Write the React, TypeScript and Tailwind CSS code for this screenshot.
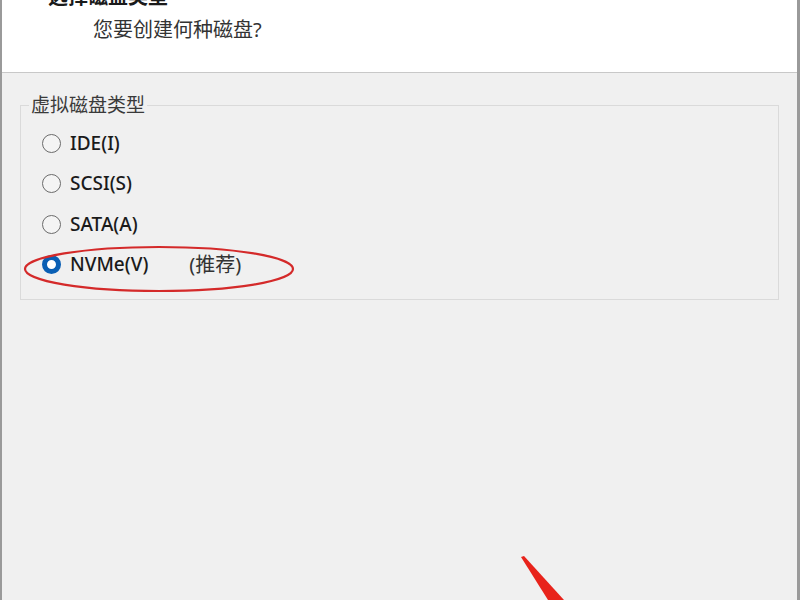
const options = [
  { label: "IDE(I)", checked: false },
  { label: "SCSI(S)", checked: false },
  { label: "SATA(A)", checked: false },
  { label: "NVMe(V)", checked: true, note: "(推荐)" },
];

function Radio({ checked }: { checked: boolean }) {
  if (checked) {
    return (
      <span className="w-[19px] h-[19px] rounded-full border-[5px] border-[#0a5fb4] bg-white shrink-0" />
    );
  }
  return (
    <span className="w-[19px] h-[19px] rounded-full border border-[#6b6b6b] bg-[#f4f4f4] shrink-0" />
  );
}

export default function App() {
  return (
    <div
      className="relative w-[800px] h-[600px] overflow-hidden bg-[#f0f0f0] border-l-2 border-r-[3px] border-[#9a9a9a] text-[#1a1a1a]"
      style={{ fontFamily: '"Noto Sans", "Noto Sans CJK SC", sans-serif' }}
    >
      {/* header */}
      <div className="h-[73px] flex flex-col bg-white border-b border-[#c8c8c8]">
        <div className="pl-[46px] -mt-[15px] text-[20px] font-bold leading-[24px]">
          选择磁盘类型
        </div>
        <div className="pl-[91px] mt-[8px] text-[20px] leading-[26px] text-[#333]">
          您要创建何种磁盘?
        </div>
      </div>

      {/* group box */}
      <fieldset className="mx-[18px] mt-[21px] h-[206px] border border-[#dadada]">
        <legend className="ml-[8px] px-[2px] text-[19px] leading-[22px] text-[#3a3a3a]">
          虚拟磁盘类型
        </legend>
        <div className="flex flex-col pt-[7px] pl-[21px]">
          {options.map((o) => (
            <div key={o.label} className="h-[40.5px] flex items-center gap-[9px]">
              <Radio checked={o.checked} />
              <span className="text-[19px] font-medium leading-none">{o.label}</span>
              {o.note && (
                <span className="ml-[32px] text-[20px] leading-none text-[#333]">{o.note}</span>
              )}
            </div>
          ))}
        </div>
      </fieldset>

      {/* red annotations */}
      <svg className="absolute left-0 top-0 pointer-events-none" width="800" height="600">
        <ellipse cx="157" cy="269" rx="134" ry="22" fill="none" stroke="#d42a2a" strokeWidth="2.2" />
        <polygon points="519,557 522,556 562,600 546,600" fill="#e8231b" />
      </svg>
    </div>
  );
}
